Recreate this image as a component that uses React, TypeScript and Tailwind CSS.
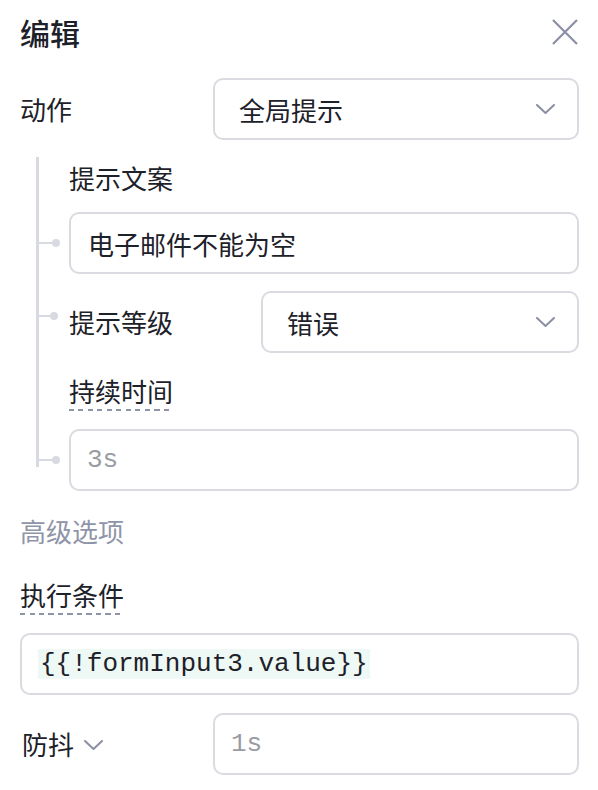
import React from "react";

const Chevron: React.FC<{ className?: string }> = ({ className }) => (
  <svg width="19" height="10" viewBox="0 0 19 10" fill="none" className={className}>
    <polyline points="1,1 9.5,9 18,1" stroke="#8a8fa3" strokeWidth="2" strokeLinecap="round" strokeLinejoin="round" />
  </svg>
);

const Branch: React.FC = () => (
  <div className="absolute left-[-32px] top-1/2 -translate-y-1/2 flex items-center">
    <div className="w-[14px] h-[2px] bg-[#d8dae1]" />
    <div className="w-[8px] h-[8px] rounded-full bg-[#d8dae1] -ml-[1px]" />
  </div>
);

const DashedLabel: React.FC<{ text: string }> = ({ text }) => (
  <div className="inline-block">
    <div className="leading-[36px]">{text}</div>
    <div className="h-[2px] bg-[repeating-linear-gradient(90deg,#8f95a8_0_5px,transparent_5px_9.5px)]" />
  </div>
);

export default function App() {
  return (
    <div className="w-[598px] min-h-[790px] bg-white pl-[20px] pr-[19px] pt-[12px] text-[26px] text-[#1d2129] font-['Noto_Sans_CJK_SC','Noto_Sans',sans-serif]">
      {/* header */}
      <div className="flex items-center justify-between h-[40px]">
        <div className="text-[30px] font-medium leading-[40px]">编辑</div>
        <svg width="26" height="26" viewBox="0 0 26 26" className="mr-[1px]">
          <path d="M1 1 L25 25 M25 1 L1 25" stroke="#8a8fa3" strokeWidth="2.2" />
        </svg>
      </div>

      {/* 动作 */}
      <div className="flex items-center mt-[26px]">
        <div className="w-[193px] leading-[36px]">动作</div>
        <div className="flex-1 h-[62px] border-2 border-[#d9dbe1] rounded-[10px] pl-[24px] pr-[22px] flex items-center justify-between">
          <span>全局提示</span>
          <Chevron />
        </div>
      </div>

      {/* tree */}
      <div className="relative mt-[17px] pl-[49px]">
        <div className="absolute left-[16px] top-0 w-[3px] h-[310px] bg-[#d8dae1]" />
        <div className="h-[40px] flex items-center">提示文案</div>
        <div className="relative mt-[15px] h-[62px] border-2 border-[#d9dbe1] rounded-[10px] pl-[17px] flex items-center">
          <Branch />
          电子邮件不能为空
        </div>
        <div className="relative mt-[17px] flex items-center">
          <div className="absolute left-[-32px] top-[21px] flex items-center">
            <div className="w-[14px] h-[2px] bg-[#d8dae1]" />
            <div className="w-[8px] h-[8px] rounded-full bg-[#d8dae1] -ml-[1px]" />
          </div>
          <div className="w-[192px] leading-[36px]">提示等级</div>
          <div className="flex-1 h-[62px] border-2 border-[#d9dbe1] rounded-[10px] pl-[24px] pr-[22px] flex items-center justify-between">
            <span>错误</span>
            <Chevron />
          </div>
        </div>
        <div className="mt-[18px]">
          <DashedLabel text="持续时间" />
        </div>
        <div className="relative mt-[18px] h-[62px] border-2 border-[#d9dbe1] rounded-[10px] pl-[16px] flex items-center">
          <Branch />
          <span className="font-['Liberation_Mono',monospace] text-[#9a9ca3]">3s</span>
        </div>
      </div>

      {/* advanced */}
      <div className="mt-[19px] h-[40px] flex items-center text-[#8f95a8]">高级选项</div>
      <div className="mt-[25px]">
        <DashedLabel text="执行条件" />
      </div>
      <div className="mt-[18px] h-[62px] border-2 border-[#d9dbe1] rounded-[10px] pl-[16px] flex items-center">
        <span className="bg-[#eef8f4] leading-[30px] px-[2px] font-['Liberation_Mono',monospace] text-[#1d2129]">
          {"{{!formInput3.value}}"}
        </span>
      </div>
      <div className="flex items-center mt-[18px]">
        <div className="w-[193px] flex items-center pl-[2px]">
          <span className="leading-[36px]">防抖</span>
          <Chevron className="ml-[10px] mt-[2px]" />
        </div>
        <div className="flex-1 h-[62px] border-2 border-[#d9dbe1] rounded-[10px] pl-[16px] flex items-center">
          <span className="font-['Liberation_Mono',monospace] text-[#9a9ca3]">1s</span>
        </div>
      </div>
    </div>
  );
}
